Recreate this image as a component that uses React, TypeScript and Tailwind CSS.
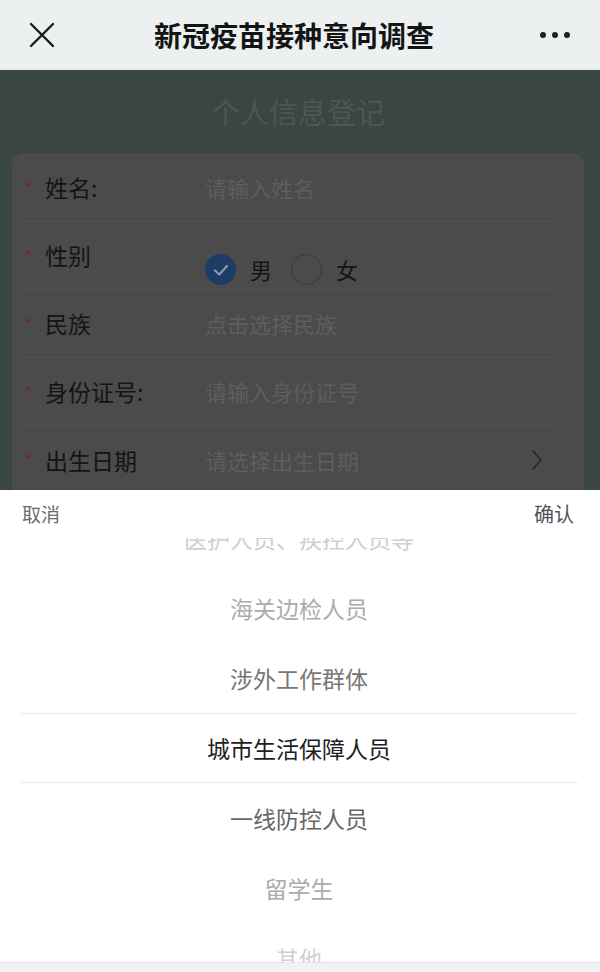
import React from 'react'

const font = { fontFamily: '"Noto Sans CJK SC", "Noto Sans", sans-serif' }

const rows = [
    { label: '姓名:', placeholder: '请输入姓名' },
    { label: '性别', radio: true },
    { label: '民族', placeholder: '点击选择民族' },
    { label: '身份证号:', placeholder: '请输入身份证号' },
    { label: '出生日期', placeholder: '请选择出生日期', arrow: true },
]

const options = [
    { text: '医护人员、疾控人员等', color: 'text-[#cfcfcf]' },
    { text: '海关边检人员', color: 'text-[#ababab]' },
    { text: '涉外工作群体', color: 'text-[#777777]' },
    { text: '城市生活保障人员', color: 'text-[#1e1e1e]', active: true },
    { text: '一线防控人员', color: 'text-[#666666]' },
    { text: '留学生', color: 'text-[#ababab]' },
    { text: '其他', color: 'text-[#d0d0d0]' },
]

export default function App() {
    return (
        <div className="w-[600px] h-[972px] flex flex-col overflow-hidden bg-white" style={font}>
            {/* nav bar */}
            <div className="h-[70px] shrink-0 bg-[#edf0f0] border-b border-[#e2e6e6] flex items-center justify-between px-[28px]">
                <svg width="28" height="28" viewBox="0 0 28 28" className="text-[#1a1a1a]">
                    <path d="M3 3 L25 25 M25 3 L3 25" stroke="currentColor" strokeWidth="2.4" strokeLinecap="round" />
                </svg>
                <div className="text-[28px] font-bold text-[#141414] pr-[8px]">新冠疫苗接种意向调查</div>
                <div className="flex gap-[6px] items-center pr-[2px]">
                    <span className="w-[6px] h-[6px] rounded-full bg-[#222]" />
                    <span className="w-[6px] h-[6px] rounded-full bg-[#222]" />
                    <span className="w-[6px] h-[6px] rounded-full bg-[#222]" />
                </div>
            </div>

            {/* dimmed form */}
            <div className="h-[420px] shrink-0 bg-[#3a4641] overflow-hidden pl-[12px] pr-[16px]">
                <div className="h-[83px] flex items-center justify-center text-[29px] text-[#4b5750]">个人信息登记</div>
                <div className="bg-[#4b4b4b] rounded-[12px] pl-[13px] pr-[33px] pt-[1px] h-[400px]">
                    {rows.map((r, idx) => (
                        <div key={idx} className={`h-[68px] flex items-center ${idx < rows.length - 1 ? 'border-b border-[#545454]' : ''}`}>
                            <span className="w-[20px] text-[16px] text-[#6b2a2a] leading-none">*</span>
                            <span className="w-[160px] text-[23px] text-[#141414]">{r.label}</span>
                            {r.radio ? (
                                <div className="flex items-center pt-[28px]">
                                    <span className="w-[31px] h-[31px] rounded-full bg-[#1d3d66] flex items-center justify-center">
                                        <svg width="18" height="18" viewBox="0 0 18 18">
                                            <path d="M3 9.5 L7.3 13.5 L15 5" fill="none" stroke="#8a9bb0" strokeWidth="2.2" strokeLinecap="round" strokeLinejoin="round" />
                                        </svg>
                                    </span>
                                    <span className="ml-[14px] text-[22px] text-[#141414]">男</span>
                                    <span className="ml-[19px] w-[31px] h-[31px] rounded-full border border-[#3a3a3a]" />
                                    <span className="ml-[14px] text-[22px] text-[#141414]">女</span>
                                </div>
                            ) : (
                                <span className="flex-1 text-[22px] text-[#5e5e5e]">{r.placeholder}</span>
                            )}
                            {r.arrow && (
                                <svg width="12" height="22" viewBox="0 0 12 22" className="mr-[8px]">
                                    <path d="M2 2 L10 11 L2 20" fill="none" stroke="#2a2a2a" strokeWidth="1.8" strokeLinecap="round" strokeLinejoin="round" />
                                </svg>
                            )}
                        </div>
                    ))}
                </div>
            </div>

            {/* picker sheet */}
            <div className="flex-1 flex flex-col bg-white">
                <div className="h-[48px] shrink-0 flex items-center justify-between pl-[22px] pr-[26px]">
                    <span className="text-[19px] text-[#6b6b6b]">取消</span>
                    <span className="text-[20px] text-[#4f5257]">确认</span>
                </div>
                <div className="h-[424px] overflow-hidden">
                    <div className="-mt-[35px]">
                        {options.map((o, idx) => (
                            <div key={idx} className={`h-[70px] ml-[20px] mr-[22px] flex items-center justify-center text-[23px] ${o.color} ${o.active ? 'border-y border-[#eaeaea]' : ''}`}>
                                {o.text}
                            </div>
                        ))}
                    </div>
                </div>
                <div className="flex-1 bg-[#f2f2f2] border-t border-[#e6e6e6]" />
            </div>
        </div>
    )
}
